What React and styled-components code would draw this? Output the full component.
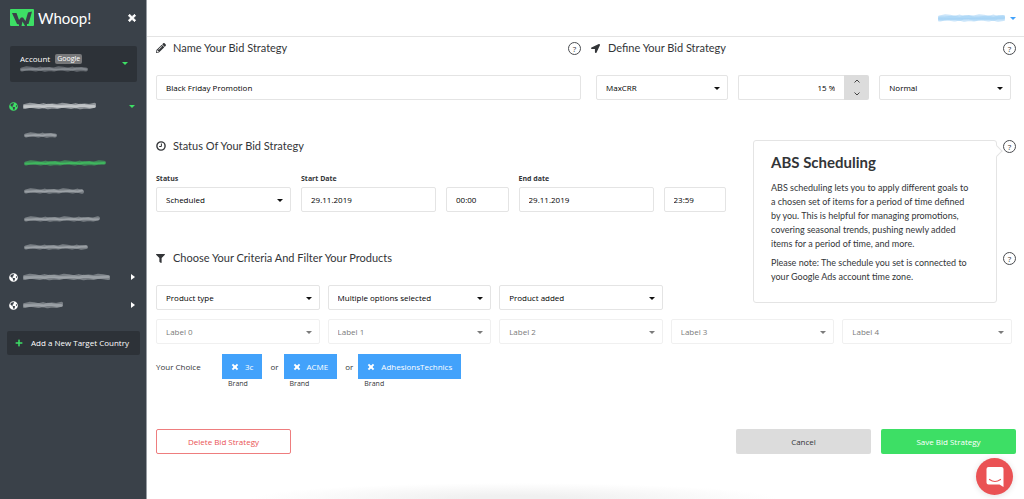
import React, { useState } from "react";
import styled, { createGlobalStyle, css } from "styled-components";
import {
  FaPencilAlt,
  FaLocationArrow,
  FaFilter,
  FaTimes,
  FaPlus,
  FaGlobeAmericas,
} from "react-icons/fa";

const c = {
  side: "#3a4149",
  sideDark: "#2d3238",
  green: "#3ddf65",
  blue: "#42a2fb",
  red: "#ea5254",
  line: "#e4e4e4",
  text: "#333538",
};

const displayFont = `Lato, "Liberation Sans", sans-serif`;

const GlobalStyle = createGlobalStyle`
  *, *::before, *::after { box-sizing: border-box; }
  body {
    margin: 0;
    background: #fff;
    color: ${c.text};
    font-family: "Open Sans", "Liberation Sans", sans-serif;
    font-size: 8px;
    line-height: 12px;
  }
  button, input, select { font: inherit; color: inherit; margin: 0; }
  button { cursor: pointer; padding: 0; border: 0; background: none; }
  h1, h2, p, ul { margin: 0; padding: 0; }
  ul { list-style: none; }
  svg { display: block; flex: none; }
`;

const Page = styled.div`
  display: flex;
  min-height: 100vh;
`;

const Sidebar = styled.nav`
  flex: none;
  width: 147px;
  background: ${c.side};
  border-right: 1px solid #989da3;
  color: #fff;
`;

const Brand = styled.div`
  display: flex;
  align-items: center;
  gap: 4px;
  height: 36px;
  padding: 0 9px 0 10px;
`;

const BrandName = styled.span`
  flex: 1;
  font-family: ${displayFont};
  font-size: 15px;
  line-height: 20px;
`;

const Account = styled.button`
  display: flex;
  align-items: center;
  justify-content: space-between;
  width: 127px;
  height: 36px;
  margin: 10px 0 10px 10px;
  padding: 0 9px 2px 10px;
  border-radius: 2px;
  background: ${c.sideDark};
  text-align: left;
`;

const AccountTitle = styled.span`
  display: flex;
  align-items: center;
  gap: 5px;
`;

const Badge = styled.span`
  padding: 0 2px;
  border-radius: 2px;
  background: #77787a;
  font-size: 7px;
  line-height: 10px;
`;

const NavRow = styled.a`
  display: flex;
  align-items: center;
  gap: 5px;
  height: 28px;
  padding: 0 11px 0 9px;
  color: ${(p) => (p.$active ? c.green : "#fff")};
`;

const NavLabel = styled.span`
  flex: 1;
`;

const SubList = styled.ul`
  padding: 1px 0 2px 15px;
`;

const AddCountry = styled.button`
  display: flex;
  align-items: center;
  gap: 8px;
  width: 133px;
  height: 24px;
  margin: 12px 7px;
  padding: 0 8px;
  border-radius: 2px;
  background: ${c.sideDark};
  white-space: nowrap;
`;

const Content = styled.div`
  flex: 1;
  min-width: 0;
  display: flex;
  flex-direction: column;
`;

const TopBar = styled.header`
  display: flex;
  justify-content: flex-end;
  align-items: center;
  height: 37px;
  padding: 0 8px;
  border-bottom: 1px solid ${c.line};
`;

const UserMenu = styled.button`
  display: flex;
  align-items: center;
  gap: 5px;
  color: ${c.blue};
`;

const Form = styled.form`
  display: flex;
  flex-direction: column;
  padding: 0 8px 0 9px;
`;

const Columns = styled.div`
  display: grid;
  grid-template-columns: 1fr 1fr;
  gap: 10px;
`;

const Section = styled.section`
  padding-bottom: 35px;
`;

const SectionHead = styled.div`
  position: relative;
  display: flex;
  align-items: center;
  height: 22px;
  margin-bottom: 16px;
`;

const HeadIcon = styled.span`
  width: 17px;
  flex: none;
`;

const SectionTitle = styled.h2`
  flex: 1;
  font-family: ${displayFont};
  font-size: 11px;
  line-height: 14px;
  font-weight: 400;
`;

const Help = styled.button`
  width: 13px;
  height: 13px;
  border: 1px solid #4a4c50;
  border-radius: 50%;
  font-size: 8px;
  line-height: 11px;
  text-align: center;
`;

const Tooltip = styled.aside`
  position: absolute;
  z-index: 2;
  top: 5px;
  right: 19px;
  width: 244px;
  padding: 12px 23px 13px 17px;
  border: 1px solid ${c.line};
  border-radius: 3px;
  background: #fff;
  font-family: ${displayFont};
  font-size: 9px;

  &::after {
    content: "";
    position: absolute;
    top: 6px;
    right: -5px;
    width: 8px;
    height: 8px;
    border: solid ${c.line};
    border-width: 1px 1px 0 0;
    background: #fff;
    transform: rotate(45deg);
  }
`;

const TooltipTitle = styled.h1`
  margin-bottom: 10px;
  font-size: 15px;
  line-height: 18px;
  font-weight: 700;
`;

const TooltipText = styled.p`
  margin-bottom: 5px;
  line-height: 14px;
`;

const FieldRow = styled.div`
  display: grid;
  gap: 10px;
  ${(p) => p.$layout === "thirds" && css`
    grid-template-columns: repeat(3, 1fr);
    padding: 0 5px;
  `}
  ${(p) => p.$layout === "twelfths" && css`
    grid-template-columns: repeat(12, 1fr);
    align-items: end;
  `}
  ${(p) => p.$layout === "fifths" && css`
    grid-template-columns: repeat(4, 27fr) 28fr;
    gap: 9px 8px;
    padding-right: 4px;
  `}
`;

const Field = styled.div`
  display: flex;
  flex-direction: column;
  gap: 2px;
  min-width: 0;
  grid-column: span ${(p) => p.$span || 1};
`;

const Label = styled.label`
  font-size: 7px;
  font-weight: 700;
`;

const boxStyle = css`
  width: 100%;
  height: 25px;
  border: 1px solid ${c.line};
  border-radius: 2px;
  background: #fff;
  color: #000;
  padding: 0 9px;
`;

const TextInput = styled.input`
  ${boxStyle}
`;

const SelectBox = styled.div`
  position: relative;
  min-width: 0;
  opacity: ${(p) => (p.$disabled ? 0.55 : 1)};
`;

const NativeSelect = styled.select`
  ${boxStyle}
  appearance: none;
  padding-right: 20px;
  opacity: 1;
`;

const Caret = styled.span`
  display: block;
  width: 0;
  height: 0;
  border: 3px solid transparent;
  ${(p) => p.$side
    ? css`border-left: 4px solid; border-right: 0;`
    : css`border-top: 3px solid; border-bottom: 0;`}
  color: ${(p) => p.$color || "#111"};
`;

const SelectCaret = styled(Caret)`
  position: absolute;
  top: 12px;
  right: 8px;
  pointer-events: none;
`;

const Stepper = styled.div`
  display: flex;
`;

const StepInput = styled(TextInput)`
  flex: 1;
  min-width: 0;
  border-right: 0;
  border-radius: 2px 0 0 2px;
  text-align: right;
`;

const StepButtons = styled.div`
  display: grid;
  width: 25px;
  border-radius: 0 2px 2px 0;
  background: #dcdcdc;
`;

const StepButton = styled.button`
  display: grid;
  place-items: center;
`;

const Choices = styled.div`
  display: flex;
  align-items: flex-start;
  gap: 5px;
  margin-top: 10px;
  line-height: 25px;
`;

const ChoiceLabel = styled.span`
  width: 61px;
`;

const Joiner = styled.span`
  padding-left: 3px;
`;

const Choice = styled.div`
  display: flex;
  flex-direction: column;
`;

const Chip = styled.button`
  display: flex;
  align-items: center;
  gap: 6px;
  height: 25px;
  padding: 0 9px;
  background: ${c.blue};
  color: #fff;
`;

const ChipNote = styled.span`
  padding-left: 6px;
  font-size: 7px;
  line-height: 10px;
`;

const Actions = styled.div`
  display: grid;
  grid-template-columns: repeat(6, 1fr);
  gap: 10px;
  padding-top: 5px;
`;

const Action = styled.button`
  height: 25px;
  border-radius: 2px;
  ${(p) => p.$kind === "delete" && css`border: 1px solid #ee7d7e; color: ${c.red};`}
  ${(p) => p.$kind === "cancel" && css`grid-column: 5; background: #dcdcdc;`}
  ${(p) => p.$kind === "save" && css`background: ${c.green}; color: #fff;`}
`;

const BottomShade = styled.div`
  height: 16px;
  margin: auto 28% 0 12%;
  background: radial-gradient(ellipse 50% 100% at 50% 100%, #f0f0f0 20%, #fff);
`;

const Launcher = styled.button`
  position: fixed;
  right: 11px;
  bottom: 4px;
  z-index: 3;
  display: grid;
  place-items: center;
  width: 37px;
  height: 37px;
  border-radius: 50%;
  background: ${c.red};
  box-shadow: 0 1px 6px rgba(0, 0, 0, 0.12);
`;

const Cross = styled(FaTimes)`
  stroke: currentColor;
  stroke-width: 48px;
`;

function LogoMark() {
  return (
    <svg width="24" height="18" viewBox="0 0 24 18" aria-hidden="true">
      <rect width="24" height="17" rx="1" fill={c.green} />
      <path
        d="M2 4H6.500L9 11L11 8.500H13L15.500 12L18 3.500L22 2.500L18.500 15H17V17H15L12.500 12.500L11.500 17H9V15.500L7 15Z"
        fill={c.side}
      />
    </svg>
  );
}

function ClockIcon() {
  return (
    <svg width="10" height="10" viewBox="0 0 10 10" fill="none" stroke="currentColor" aria-hidden="true">
      <circle cx="5" cy="5" r="4.100" strokeWidth="1.400" />
      <path d="M5.400 2.500V5.500H3.200" strokeWidth="1" />
    </svg>
  );
}

/* Smeared marker stroke that hides a private name. */
function Scribble({ width, color = "#a9aeb3", thick = 4 }) {
  const n = Math.round(width / 5);
  const lift = [0.5, -0.7, -0.2, 0.6, -0.4, 0.8, 0];
  const point = (i, k) => `${((width - 4) * i) / n + 2} ${4 + lift[(i * k) % 7]}`;
  const line = (k) =>
    "M" + Array.from({ length: n + 1 }, (_, i) => point(i, k)).join(" L");
  return (
    <svg width={width} height="8" viewBox={`0 0 ${width} 8`} fill="none" stroke={color} strokeLinecap="round" strokeLinejoin="round" aria-hidden="true">
      <path d={line(1)} strokeWidth={thick} opacity="0.55" />
      <path d={line(3)} strokeWidth={thick - 2} opacity="0.6" />
      <path d={`M1 5L${width - 1} 4`} strokeWidth="1" opacity="0.5" />
    </svg>
  );
}

function Select({ label, id, value, disabled }) {
  return (
    <SelectBox $disabled={disabled}>
      <NativeSelect id={id} aria-label={label} disabled={disabled} defaultValue={value}>
        <option>{value}</option>
      </NativeSelect>
      <SelectCaret />
    </SelectBox>
  );
}

function Chevron({ down }) {
  return (
    <svg width="6" height="4" viewBox="0 0 6 4" fill="none" stroke="#444" aria-hidden="true">
      <path d={down ? "M0.500 0.500L3 3L5.500 0.500" : "M0.500 3.500L3 1L5.500 3.500"} />
    </svg>
  );
}

function Heading({ icon, title, children }) {
  return (
    <SectionHead>
      <HeadIcon>{icon}</HeadIcon>
      <SectionTitle>{title}</SectionTitle>
      {children}
      <Help type="button" aria-label={`Help: ${title}`}>?</Help>
    </SectionHead>
  );
}

const subItems = [33, 82, 60, 76, 64];
const chips = ["3c", "ACME", "AdhesionsTechnics"];

export default function App() {
  const [percent, setPercent] = useState(15);
  return (
    <Page>
      <GlobalStyle />
      <Sidebar>
        <Brand>
          <LogoMark />
          <BrandName>Whoop!</BrandName>
          <button type="button" aria-label="Close menu"><Cross size={10} /></button>
        </Brand>
        <Account type="button">
          <span>
            <AccountTitle>Account <Badge>Google</Badge></AccountTitle>
            <Scribble width={68} color="#8f959b" />
          </span>
          <Caret $color={c.green} />
        </Account>
        <ul>
          <li>
            <NavRow href="#country-1" aria-label="Country 1">
              <FaGlobeAmericas size={9} color={c.green} />
              <NavLabel><Scribble width={73} color="#d5d8da" thick={5} /></NavLabel>
              <Caret $color={c.green} />
            </NavRow>
            <SubList>
              {subItems.map((w, i) => (
                <li key={w}>
                  <NavRow href={`#strategy-${i + 1}`} aria-label={`Strategy ${i + 1}`} $active={i === 1}>
                    <Scribble width={w} color={i === 1 ? "#41c962" : undefined} />
                  </NavRow>
                </li>
              ))}
            </SubList>
          </li>
          {[87, 40].map((w, i) => (
            <li key={w}>
              <NavRow href={`#country-${i + 2}`} aria-label={`Country ${i + 2}`}>
                <FaGlobeAmericas size={9} />
                <NavLabel><Scribble width={w} thick={5} /></NavLabel>
                <Caret $side $color="#fff" />
              </NavRow>
            </li>
          ))}
        </ul>
        <AddCountry type="button">
          <FaPlus size={8} color={c.green} />
          Add a New Target Country
        </AddCountry>
      </Sidebar>

      <Content>
        <TopBar>
          <UserMenu type="button" aria-label="User menu">
            <Scribble width={67} color="#9fd0f5" thick={6} />
            <Caret $color={c.blue} />
          </UserMenu>
        </TopBar>

        <Form onSubmit={(e) => e.preventDefault()}>
          <Columns>
            <Section>
              <Heading icon={<FaPencilAlt size={10} />} title="Name Your Bid Strategy" />
              <TextInput aria-label="Strategy name" defaultValue="Black Friday Promotion" />
            </Section>
            <Section>
              <Heading icon={<FaLocationArrow size={9} />} title="Define Your Bid Strategy" />
              <FieldRow $layout="thirds">
                <Select label="Goal" value="MaxCRR" />
                <Stepper>
                  <StepInput
                    aria-label="Target percentage"
                    value={`${percent} %`}
                    onChange={(e) => setPercent(parseInt(e.target.value, 10) || 0)}
                  />
                  <StepButtons>
                    <StepButton type="button" aria-label="Increase" onClick={() => setPercent(percent + 1)}><Chevron /></StepButton>
                    <StepButton type="button" aria-label="Decrease" onClick={() => setPercent(percent - 1)}><Chevron down /></StepButton>
                  </StepButtons>
                </Stepper>
                <Select label="Pace" value="Normal" />
              </FieldRow>
            </Section>
          </Columns>

          <Section>
            <Heading icon={<ClockIcon />} title="Status Of Your Bid Strategy">
              <Tooltip>
                <TooltipTitle>ABS Scheduling</TooltipTitle>
                <TooltipText>
                  ABS scheduling lets you to apply different goals to a chosen set of items for a
                  period of time defined by you. This is helpful for managing promotions, covering
                  seasonal trends, pushing newly added items for a period of time, and more.
                </TooltipText>
                <TooltipText>
                  Please note: The schedule you set is connected to your Google Ads account time zone.
                </TooltipText>
              </Tooltip>
            </Heading>
            <FieldRow $layout="twelfths">
              <Field $span={2}>
                <Label htmlFor="status">Status</Label>
                <Select id="status" value="Scheduled" />
              </Field>
              <Field $span={2}>
                <Label htmlFor="start">Start Date</Label>
                <TextInput id="start" defaultValue="29.11.2019" />
              </Field>
              <Field><TextInput aria-label="Start time" defaultValue="00:00" /></Field>
              <Field $span={2}>
                <Label htmlFor="end">End date</Label>
                <TextInput id="end" defaultValue="29.11.2019" />
              </Field>
              <Field><TextInput aria-label="End time" defaultValue="23:59" /></Field>
            </FieldRow>
          </Section>

          <Section>
            <Heading icon={<FaFilter size={9} />} title="Choose Your Criteria And Filter Your Products" />
            <FieldRow $layout="fifths">
              <Select label="Criteria" value="Product type" />
              <Select label="Options" value="Multiple options selected" />
              <Select label="Added" value="Product added" />
              <span />
              <span />
              {[0, 1, 2, 3, 4].map((n) => (
                <Select key={n} label={`Label ${n}`} value={`Label ${n}`} disabled />
              ))}
            </FieldRow>
            <Choices>
              <ChoiceLabel>Your Choice</ChoiceLabel>
              {chips.map((name, i) => (
                <React.Fragment key={name}>
                  {i > 0 && <Joiner>or</Joiner>}
                  <Choice>
                    <Chip type="button" aria-label={`Remove ${name}`}><Cross size={8} />{name}</Chip>
                    <ChipNote>Brand</ChipNote>
                  </Choice>
                </React.Fragment>
              ))}
            </Choices>
          </Section>

          <Actions>
            <Action type="button" $kind="delete">Delete Bid Strategy</Action>
            <Action type="button" $kind="cancel">Cancel</Action>
            <Action type="submit" $kind="save">Save Bid Strategy</Action>
          </Actions>
        </Form>
        <BottomShade />
      </Content>

      <Launcher type="button" aria-label="Open chat">
        <svg width="18" height="20" viewBox="0 0 18 20" aria-hidden="true">
          <path d="M2.500 0H15.500Q17.500 0 17.500 2V20L13.500 17.500H2.500Q0.500 17.500 0.500 15.500V2Q0.500 0 2.500 0Z" fill="#fff" />
          <path d="M3.500 12.500Q9 16.500 14.500 12.500" fill="none" stroke={c.red} strokeWidth="1.200" strokeLinecap="round" />
        </svg>
      </Launcher>
    </Page>
  );
}
